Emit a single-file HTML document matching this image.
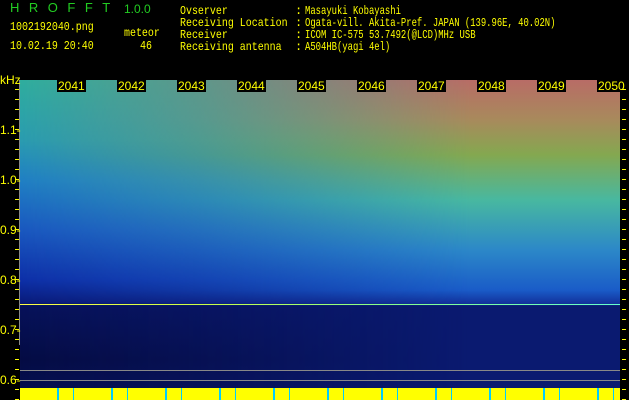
<!DOCTYPE html>
<html><head><meta charset="utf-8"><style>
html,body{margin:0;padding:0;background:#000;width:629px;height:400px;overflow:hidden}
body{position:relative;font-family:"Liberation Mono","DejaVu Sans Mono",monospace;font-size:12px;color:#ff0;line-height:12px}
.t{position:absolute;white-space:pre;transform-origin:0 0}
.a{transform:scaleX(.83)}
.v{transform:scaleX(.74)}
#spec{position:absolute;left:20px;top:80px;width:600px;height:320px;overflow:hidden;
background:linear-gradient(180deg,#2fae9e 0px,#2a9cb0 60px,#2080c4 100px,#1a58c0 150px,#0e30a8 200px,#0a1c7c 222px,#07125a 226px,#050c44 280px,#060e4c 300px,#061050 320px)}
#r{position:absolute;inset:0;
background:linear-gradient(180deg,#b86c66 0px,#a88a5c 40px,#84a850 75px,#48b8a0 120px,#2c88c8 170px,#1a5cc8 210px,#12309a 224px,#0a1a70 226px,#0a1a70 300px,#0a1a70 320px);
-webkit-mask-image:linear-gradient(90deg,transparent 0%,rgba(0,0,0,.35) 30%,#000 75%);mask-image:linear-gradient(90deg,transparent 0%,rgba(0,0,0,.35) 30%,#000 75%)}
.lab{position:absolute;top:80px;height:12px;background:#000;color:#ff0;font-size:12px;line-height:12px;padding:0 1px;font-family:"Liberation Sans",sans-serif}
.ax{position:absolute;left:0;color:#ff0;font-family:"Liberation Sans",sans-serif;font-size:12px;line-height:12px}
</style></head><body>
<div class="t" style="left:10px;top:2px;color:#2c2;font-family:'Liberation Sans',sans-serif;font-size:13px;letter-spacing:9.5px">HROFFT</div>
<div class="t" style="left:124px;top:3px;color:#2c2;font-family:'Liberation Sans',sans-serif;font-size:12px">1.0.0</div>
<div class="t a" style="left:10px;top:21px">1002192040.png</div>
<div class="t a" style="left:124px;top:27px">meteor</div>
<div class="t a" style="left:10px;top:40px">10.02.19 20:40</div>
<div class="t a" style="left:140px;top:40px">46</div>
<div class="t a" style="left:180px;top:5px">Ovserver
Receiving Location
Receiver
Receiving antenna</div>
<div class="t" style="left:295px;top:5px">:
:
:
:</div>
<div class="t v" style="left:305px;top:5px">Masayuki Kobayashi
Ogata-vill. Akita-Pref. JAPAN (139.96E, 40.02N)
ICOM IC-575 53.7492(@LCD)MHz USB
A504HB(yagi 4el)</div>

<div id="spec"><div id="r"></div>
<div style="position:absolute;left:0;top:224px;width:600px;height:1px;background:linear-gradient(90deg,#ff4 0,#cf4 30%,#8f8 60%,#6fc 100%)"></div>
<div style="position:absolute;left:0;top:290px;width:600px;height:1px;background:#888"></div>
<div style="position:absolute;left:0;top:300px;width:600px;height:1px;background:#888"></div>
<div style="position:absolute;left:0;top:308px;width:600px;height:12px;background:repeating-linear-gradient(90deg,#ff0 0 37px,#0cf 37px 39px,#ff0 39px 53px,#0cf 53px 54px)"></div>
</div>
<div style="position:absolute;left:19px;top:80px;width:1px;height:265px;background:#888"></div>

<div class="lab" style="left:57px">2041</div><div class="lab" style="left:117px">2042</div>
<div class="lab" style="left:177px">2043</div><div class="lab" style="left:237px">2044</div>
<div class="lab" style="left:297px">2045</div><div class="lab" style="left:357px">2046</div>
<div class="lab" style="left:417px">2047</div><div class="lab" style="left:477px">2048</div>
<div class="lab" style="left:537px">2049</div><div class="lab" style="left:597px">2050</div>

<div class="ax" style="top:74px">kHz</div>
<div class="ax" style="top:124px">1.1-</div>
<div class="ax" style="top:174px">1.0-</div>
<div class="ax" style="top:224px">0.9-</div>
<div class="ax" style="top:274px">0.8-</div>
<div class="ax" style="top:324px">0.7-</div>
<div class="ax" style="top:374px">0.6-</div>
<div style="position:absolute;left:15px;top:80px;width:4px;height:320px;background:repeating-linear-gradient(180deg,transparent 0 9px,#ff0 9px 10px)"></div>
<div style="position:absolute;left:622px;top:80px;width:4px;height:320px;background:repeating-linear-gradient(180deg,transparent 0 9px,#ff0 9px 10px)"></div>
</body></html>
